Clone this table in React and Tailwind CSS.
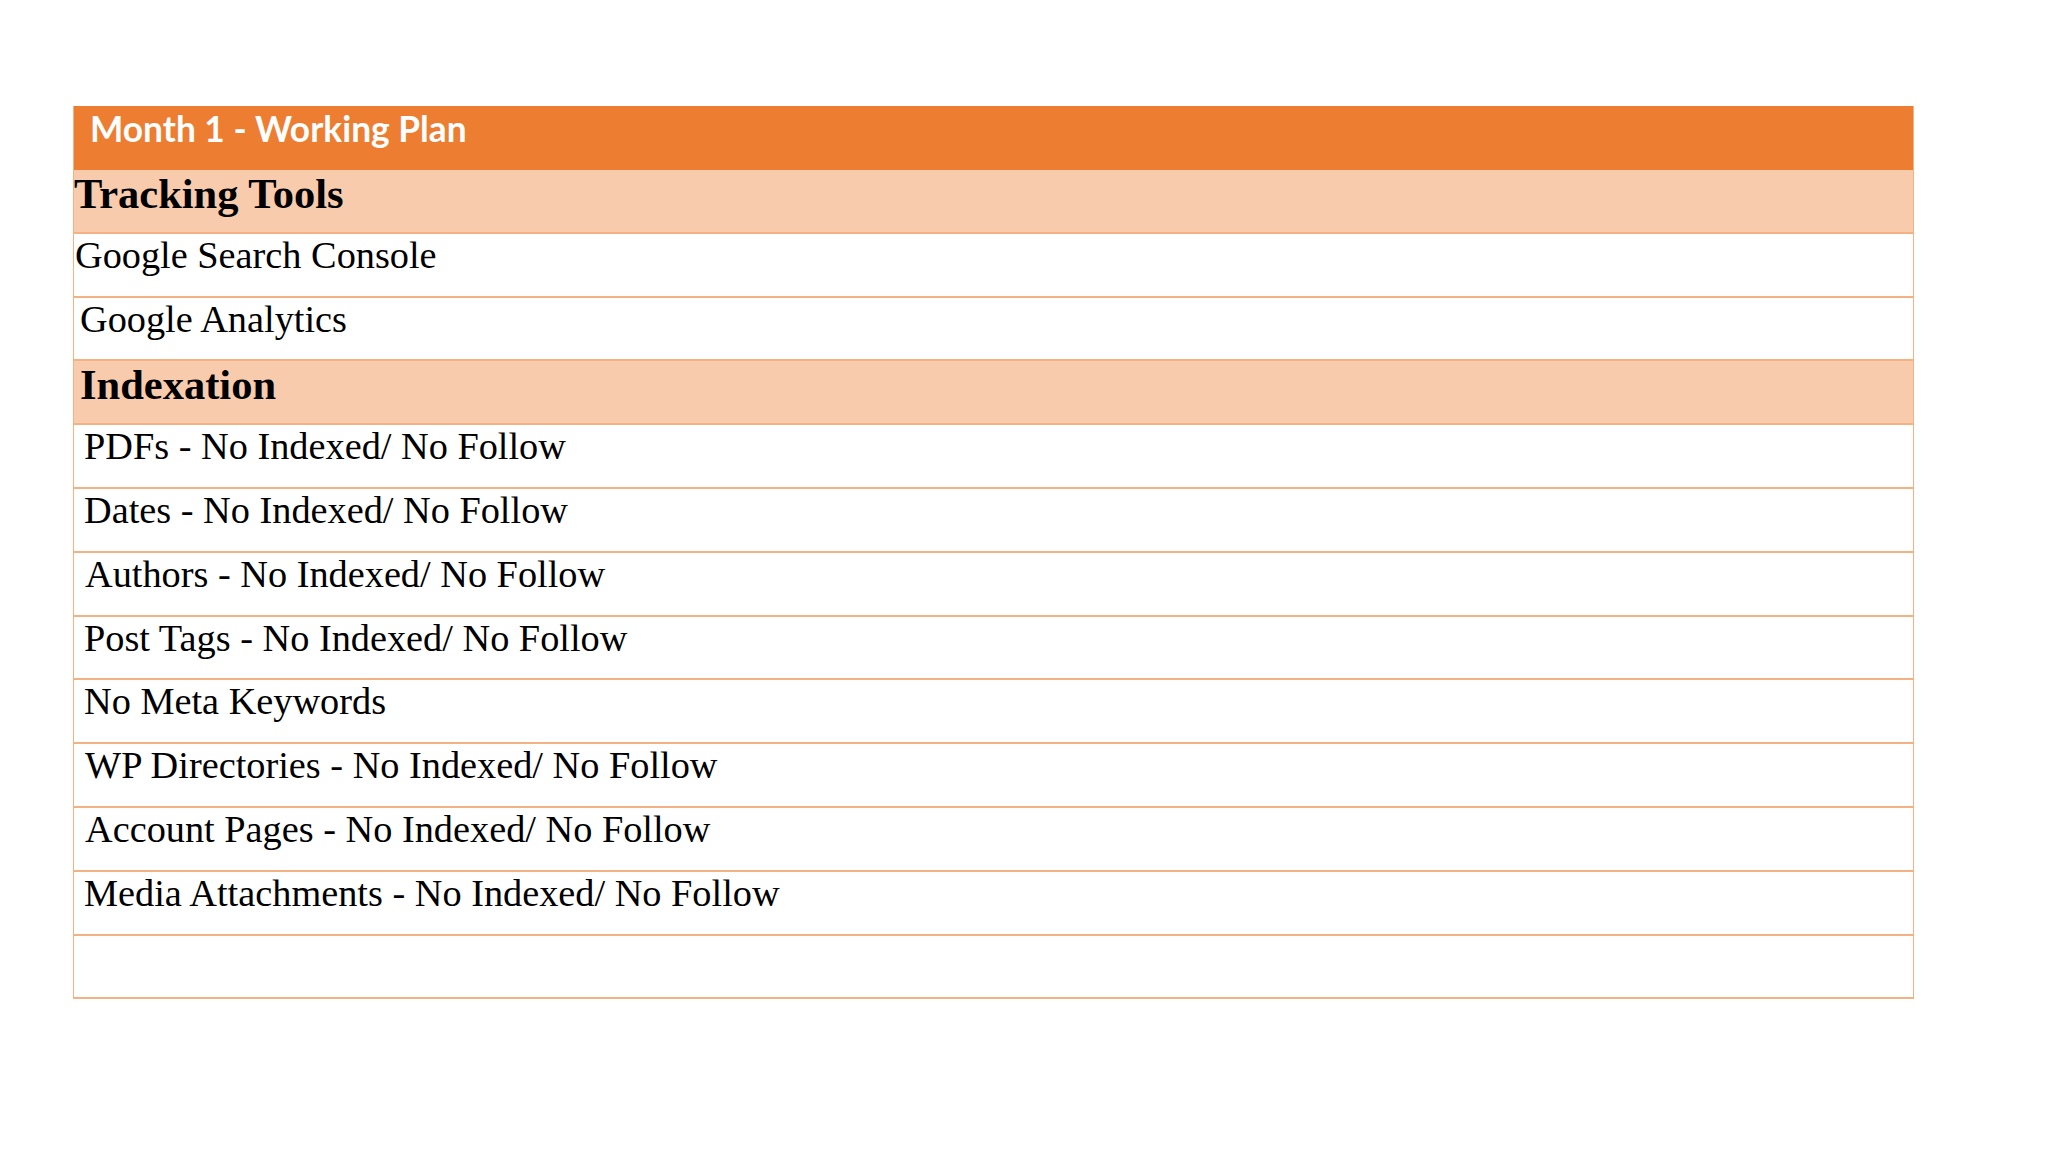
const sections = [
  {
    title: "Tracking Tools",
    pad: "pl-0",
    items: [
      { text: "Google Search Console", pad: "pl-[1px]" },
      { text: "Google Analytics", pad: "pl-[6px]" },
    ],
  },
  {
    title: "Indexation",
    pad: "pl-[6px]",
    items: [
      { text: "PDFs - No Indexed/ No Follow", pad: "pl-[10px]" },
      { text: "Dates - No Indexed/ No Follow", pad: "pl-[10px]" },
      { text: "Authors - No Indexed/ No Follow", pad: "pl-[11px]" },
      { text: "Post Tags - No Indexed/ No Follow", pad: "pl-[10px]" },
      { text: "No Meta Keywords", pad: "pl-[10px]" },
      { text: "WP Directories - No Indexed/ No Follow", pad: "pl-[11px]" },
      { text: "Account Pages - No Indexed/ No Follow", pad: "pl-[11px]" },
      { text: "Media Attachments - No Indexed/ No Follow", pad: "pl-[10px]" },
    ],
  },
];

const serif = "font-['Liberation_Serif','Times_New_Roman',serif]";

export default function App() {
  return (
    <div className="min-h-screen w-full bg-white pt-[106px] pl-[73px]">
      <div className="w-[1841px] border-x border-[#f4b183]">
        <div className="h-[64px] bg-[#ed7d31] pl-[16px] pt-[5px]">
          <span className="text-[35.3px] font-bold leading-none text-white font-['Lato','Noto_Sans',sans-serif]">
            Month 1 - Working Plan
          </span>
        </div>
        {sections.map((s) => (
          <div key={s.title}>
            <div className={`h-[63.8px] border-b-2 border-[#f4b183] bg-[#f8cbad] pt-[3px] ${s.pad}`}>
              <span className={`text-[42.5px] font-bold leading-none text-black ${serif}`}>{s.title}</span>
            </div>
            {s.items.map((it) => (
              <div key={it.text} className={`h-[63.8px] border-b-2 border-[#f4b183] bg-white pt-[2px] ${it.pad}`}>
                <span className={`text-[38.3px] leading-none text-black ${serif}`}>{it.text}</span>
              </div>
            ))}
          </div>
        ))}
        <div className="h-[63.8px] border-b-2 border-[#f4b183] bg-white" />
      </div>
    </div>
  );
}
